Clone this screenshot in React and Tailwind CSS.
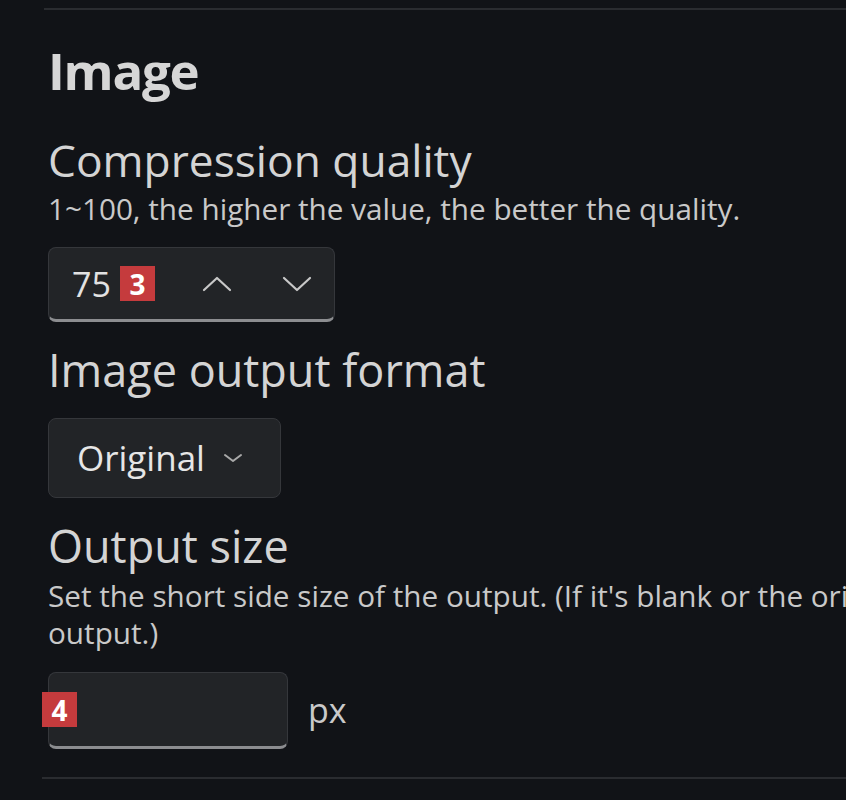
import React from 'react';

const font = { fontFamily: '"Open Sans", "Noto Sans", sans-serif' };

function Badge({ n }) {
  return (
    <span className="inline-flex items-center justify-center w-[35px] h-[35px] bg-[#c53b3d] text-white text-[28px] font-bold leading-none">
      {n}
    </span>
  );
}

function Chevron({ up, className }) {
  return (
    <svg viewBox="0 0 30 16" className={className} fill="none" stroke="currentColor" strokeWidth="2.2" strokeLinecap="round" strokeLinejoin="round">
      {up ? <path d="M2 14 L15 2 L28 14" /> : <path d="M2 2 L15 14 L28 2" />}
    </svg>
  );
}

export default function App() {
  return (
    <div className="w-[846px] h-[800px] bg-[#111317] overflow-hidden text-[#d9d9d9]" style={font}>
      <div className="ml-[44px] mt-[8px] h-[2px] bg-[#2a2c30]" />

      <div className="pl-[48px]">
        {/* Section title */}
        <h2 className="mt-[32px] text-[51px] leading-[56px] font-bold text-[#d6d6d6] tracking-tight">Image</h2>

        {/* Compression quality */}
        <div className="mt-[36px] text-[44.3px] leading-[52px] text-[#d4d4d4]">Compression quality</div>
        <div className="mt-[5px] text-[29.7px] leading-[36px] text-[#c9c9c9] whitespace-nowrap">1~100, the higher the value, the better the quality.</div>
        <div className="mt-[20px] w-[287px] h-[75px] rounded-[8px] bg-[#222427] border border-[#35373b] border-b-[3px] border-b-[#8c8d90] flex items-center pl-[23px]">
          <span className="text-[34px] text-[#e2e2e2] leading-none">75</span>
          <span className="ml-[9px]"><Badge n="3" /></span>
          <Chevron up className="ml-[47px] w-[30px] h-[16px] text-[#c8c8c8]" />
          <Chevron className="ml-[50px] w-[30px] h-[16px] text-[#c8c8c8]" />
        </div>

        {/* Output format */}
        <div className="mt-[22px] text-[45px] leading-[52px] text-[#d4d4d4]">Image output format</div>
        <div className="mt-[22px] w-[233px] h-[80px] rounded-[8px] bg-[#222427] border border-[#35373b] flex items-center pl-[28px]">
          <span className="text-[35px] text-[#e6e6e6]">Original</span>
          <svg viewBox="0 0 20 10" className="ml-[18px] w-[20px] h-[10px] text-[#a9a9a9]" fill="none" stroke="currentColor" strokeWidth="2" strokeLinecap="round" strokeLinejoin="round">
            <path d="M2 2 L10 8 L18 2" />
          </svg>
        </div>

        {/* Output size */}
        <div className="mt-[22px] text-[45px] leading-[52px] text-[#d4d4d4]">Output size</div>
        <div className="mt-[5px] w-[1400px] text-[29.7px] leading-[37px] text-[#c9c9c9]">
          <div className="whitespace-nowrap">Set the short side size of the output. (If it's blank or the original image is smaller than this value, it will be the original size of the</div>
          <div>output.)</div>
        </div>
        <div className="mt-[21px] flex items-center">
          <div className="relative w-[240px] h-[77px] rounded-[8px] bg-[#222427] border border-[#35373b] border-b-[3px] border-b-[#8c8d90]">
            <span className="absolute left-[-7px] top-[19px]"><Badge n="4" /></span>
          </div>
          <span className="ml-[20px] text-[34px] text-[#c9c9c9]">px</span>
        </div>
      </div>

      <div className="ml-[42px] mt-[28px] h-[2px] bg-[#2a2c30]" />
    </div>
  );
}
